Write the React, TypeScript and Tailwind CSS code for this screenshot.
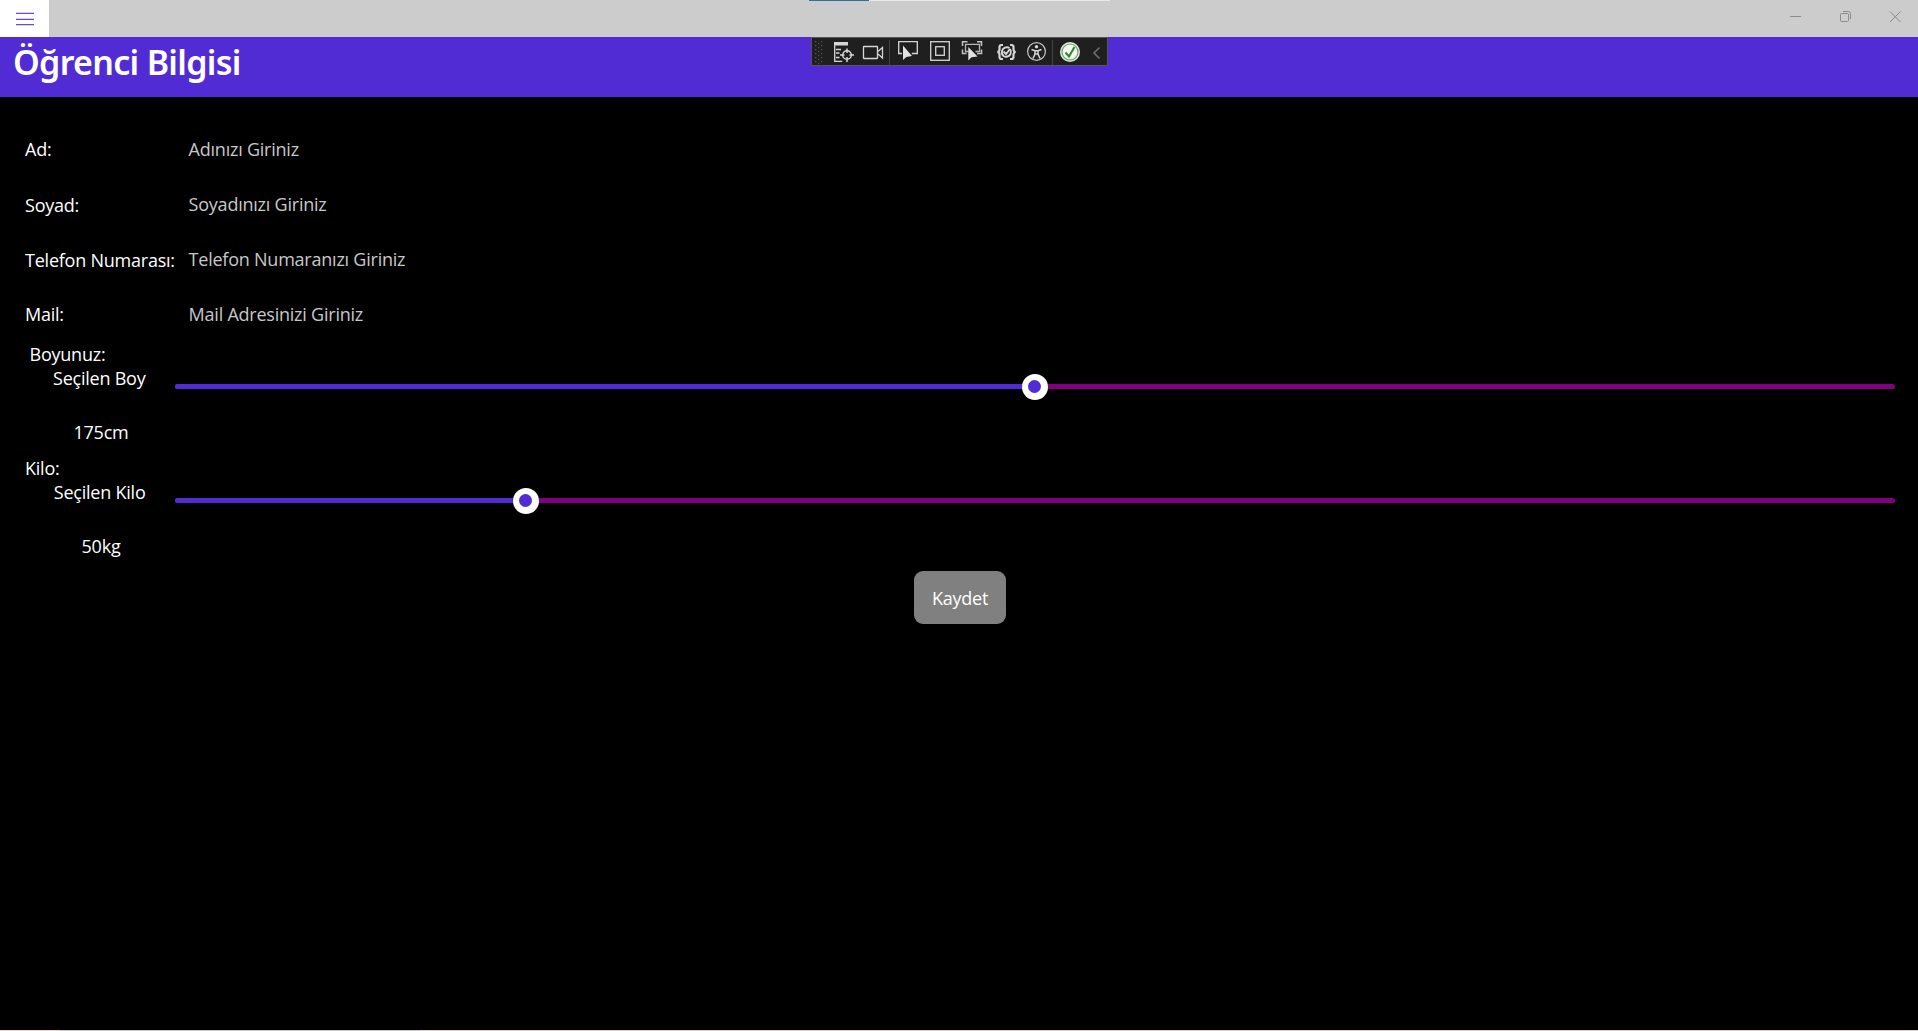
import React from "react";

const fields = [
  { label: "Ad:", hint: "Adınızı Giriniz", pad: "pt-0" },
  { label: "Soyad:", hint: "Soyadınızı Giriniz", pad: "pt-px" },
  { label: "Telefon Numarası:", hint: "Telefon Numaranızı Giriniz", pad: "pt-px" },
  { label: "Mail:", hint: "Mail Adresinizi Giriniz", pad: "pt-0" },
];

function TitleBar() {
  return (
    <div className="relative flex h-[37px] justify-between bg-[#cccccc]">
      <button className="flex w-[49px] items-center justify-center bg-white">
        <svg width="19" height="15" viewBox="0 0 19 15" className="mt-px" shapeRendering="crispEdges">
          <path d="M1 1.5h18M1 7.500h18M1 12.500h18" stroke="#6a4bd0" strokeWidth="1" />
          <path d="M1 .5h18M1 6.500h18M1 13.500h18" stroke="#c9bdf0" strokeWidth="1" opacity=".7" />
        </svg>
      </button>
      <div className="absolute top-0 left-[809px] flex h-px w-[301px] bg-[#e8e8e8]">
        <div className="w-[60px] bg-[#31709a]" />
      </div>
      <svg width="130" height="37" viewBox="0 0 130 37" className="mr-[2px]" fill="none" stroke="#8b8b8b">
        <path d="M4 16.500h11" />
        <rect x="54.500" y="13.500" width="8" height="8" rx="1" />
        <path d="M57 11.500h5.500a2 2 0 0 1 2 2V19" />
        <path d="M104 11.500l10.500 10.500M114.500 11.500l-10.500 10.500" />
      </svg>
    </div>
  );
}

function DebugToolbar() {
  return (
    <div className="absolute top-0 left-[811px] h-[29px] w-[297px] border border-[#565656] bg-[#1f1f1f]">
      <svg width="295" height="27" viewBox="812 38 295 27" fill="none" stroke="#d6d6d6" strokeWidth="1.3">
        <g fill="#555" stroke="none">
          {[41, 45, 49, 53, 57, 61].map((y) => (
            <g key={y}>
              <rect x="815" y={y} width="1.300" height="1.300" />
              <rect x="821" y={y} width="1.300" height="1.300" />
              <rect x="818" y={y + 2} width="1.300" height="1.300" />
            </g>
          ))}
        </g>
        {/* live visual tree */}
        <rect x="834" y="42" width="14" height="3.500" fill="#d6d6d6" stroke="none" />
        <path d="M834.700 45v16.300h7.500M836 49.500h5M836 53h3.500M836 57.500h3.500" />
        <circle cx="847" cy="55" r="4.300" strokeWidth="1.500" />
        <path d="M847 48.500v4.500M847 57v5M840 55h4.500M849.500 55h4.500" strokeWidth="1.500" />
        {/* camera */}
        <rect x="863.500" y="46.500" width="14" height="12" rx=".5" />
        <path d="M878 51.500l4.500-4v10.500l-4.500-4" />
        <path d="M889.500 40v25M1052.500 40v25" stroke="#454545" strokeWidth="1" />
        {/* select element */}
        <path d="M902 53.500h-3.300V41.700h18.600v11.800h-5.500" />
        <path d="M903 45.500v14.500l3.300-3 5.700-1z" fill="#e2e2e2" stroke="none" />
        {/* layout adorners */}
        <rect x="930.700" y="41.700" width="18.600" height="18.600" />
        <rect x="935.700" y="46.700" width="8.600" height="8.600" />
        {/* track focus */}
        <path d="M962.500 46v-4.300h5M977 41.700h4.500V46M981.500 49.500v4h-4.500M966.500 53.500h-4v-4" stroke="#c4c4c4" strokeWidth="1.500" />
        <path d="M968.500 51.500h-3v-7.200h14v7.200h-4" stroke="#b8b8b8" />
        <path d="M968.300 47v13.500l3.200-3.300 6-.7z" fill="#e2e2e2" stroke="none" />
        {/* hot reload braces */}
        <path d="M1003 45h-1.500q-2 0-2 2v2.500q0 2-2 2.500q2 .5 2 2.500v2.500q0 2 2 2h1.500M1010 45h1.500q2 0 2 2v2.500q0 2 2 2.500q-2 .5-2 2.500v2.500q0 2-2 2h-1.500" strokeWidth="2.200" />
        <path d="M1003.500 56a5 5 0 0 1-1.500-5a5 5 0 0 1 7.500-3M1010 49a5 5 0 0 1 .5 5a5 5 0 0 1-7 2M1003.500 51.500l2.500 2.500 4-5" strokeWidth="1.900" />
        {/* accessibility */}
        <circle cx="1036.500" cy="51.500" r="8.900" stroke="#bdbdbd" />
        <circle cx="1036.500" cy="46.700" r="1.700" fill="#d6d6d6" stroke="none" />
        <path d="M1031.500 49.500l3.500 1.200h3l3.500-1.200M1035 50.500v3.500l-2 4.500M1038 50.500v3.500l2 4.500M1035 54h3" strokeWidth="1.500" />
        {/* status */}
        <circle cx="1070" cy="52" r="10" fill="#dfeee0" stroke="none" />
        <circle cx="1070" cy="52" r="8" fill="#f5f5f5" stroke="#5fa563" strokeWidth="1.200" />
        <path d="M1065.500 52.500l3.500 4 5.500-9.500" stroke="#27892d" strokeWidth="2" />
        <path d="M1099.500 47.500l-5.500 5.500 5.500 5.500" stroke="#6c6c6c" strokeWidth="1.700" />
      </svg>
    </div>
  );
}

function Slider({ value }: { value: number }) {
  return (
    <div className="relative mt-[18px] h-[5px] w-[1720px] rounded-full bg-[#800080]">
      <div className="h-full rounded-l-full bg-[#512bd4]" style={{ width: value }} />
      <div
        className="absolute -top-[10px] h-[26px] w-[26px] rounded-full bg-white pt-[6px] pl-[6px]"
        style={{ left: value - 13 }}
      >
        <div className="h-[13px] w-[13px] rounded-full bg-[#512bd4]" />
      </div>
    </div>
  );
}

function Measure({
  title,
  titlePad,
  caption,
  reading,
  value,
}: {
  title: string;
  titlePad: string;
  caption: string;
  reading: string;
  value: number;
}) {
  return (
    <section className="h-[114px]">
      <div className={titlePad}>{title}</div>
      <div className="flex">
        <div className="w-[175px] shrink-0">
          <div className="pr-[29.5px] text-right">{caption}</div>
          <div className="mt-[30px] ml-[26px] w-[150px] text-center">{reading}</div>
        </div>
        <Slider value={value} />
      </div>
    </section>
  );
}

export default function App() {
  return (
    <div className="flex h-[1031px] w-[1918px] flex-col overflow-hidden bg-black font-['Open_Sans',sans-serif] text-[18px] leading-6 tracking-[-0.23px] text-white">
      <TitleBar />
      <header className="relative h-[60px] shrink-0 bg-[#512bd4] pl-[13px]">
        <h1 className="pt-[2px] font-['Noto_Sans',sans-serif] text-[34px] leading-[46px] font-semibold tracking-[-0.7px] whitespace-nowrap">
          Öğrenci Bilgisi
        </h1>
        <DebugToolbar />
      </header>
      <main className="grow pt-[40px]">
        {fields.map((f) => (
          <div key={f.label} className="flex h-[55px] whitespace-nowrap">
            <label className={`w-[163px] shrink-0 pl-[25px] ${f.pad}`}>{f.label}</label>
            <span className="pl-[25.6px] text-[#c8c8c8]">{f.hint}</span>
          </div>
        ))}
        <div className="-mt-[15px]">
          <Measure title="Boyunuz:" titlePad="pl-[29.5px]" caption="Seçilen Boy" reading="175cm" value={860} />
          <Measure title="Kilo:" titlePad="pl-[25px]" caption="Seçilen Kilo" reading="50kg" value={351} />
        </div>
        <button className="mt-px ml-[914px] flex h-[53px] w-[92px] items-center justify-center rounded-[9px] bg-[#808080]">
          Kaydet
        </button>
      </main>
      <div className="flex h-px shrink-0 bg-[#dcd2d2]">
        <div className="w-[60px] bg-[#e8d8d4]" />
        <div className="w-[360px] bg-[#c8c8c8]" />
      </div>
    </div>
  );
}
